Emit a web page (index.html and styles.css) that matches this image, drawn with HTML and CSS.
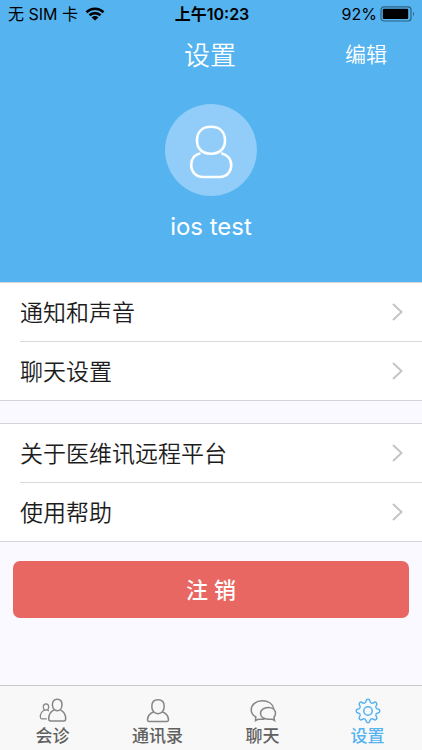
FILE: index.html
```html
<!DOCTYPE html>
<html lang="zh-CN">
<head>
<meta charset="utf-8">
<meta name="viewport" content="width=device-width, initial-scale=1">
<title>设置</title>
<link rel="stylesheet" href="styles.css">
</head>
<body>
<div class="app">
  <header class="hero">
    <div class="status">
      <div class="carrier">
        <span>无 SIM 卡</span>
        <svg class="wifi" viewBox="0 0 20 14" aria-hidden="true">
          <path d="M1.500 5.200a12.200 12.200 0 0 1 17 0M4.500 8.300a8 8 0 0 1 11 0" fill="none" stroke="#000" stroke-width="2.600"/>
          <path d="M10 13.600 6.600 10.400a4.800 4.800 0 0 1 6.800 0z"/>
        </svg>
      </div>
      <time class="clock">上午10:23</time>
      <div class="power">
        <span>92%</span>
        <svg class="battery" viewBox="0 0 36 16" aria-hidden="true">
          <rect x="1" y=".8" width="30" height="14.200" rx="3" fill="none" stroke="#2d607f" stroke-width="1.200"/>
          <rect x="2.800" y="2.800" width="25.400" height="10.200" rx="1"/>
          <path d="M33 5.600q2 2.300 0 4.600z" fill="#2d607f"/>
        </svg>
      </div>
    </div>
    <div class="navbar">
      <h1 class="title">设置</h1>
      <button class="edit" type="button">编辑</button>
    </div>
    <div class="profile">
      <div class="avatar">
        <svg viewBox="0 0 92 92" fill="none" stroke="#fff" stroke-width="2.600" aria-hidden="true">
          <path d="M46 22.800c9 0 14 5.500 14 14 0 8-5.500 13-14 13s-14-5-14-13c0-8.500 5-14 14-14z"/>
          <path d="M35.500 49.200C29.500 50.500 26.200 55 26.200 61c0 7 5 12 11.800 12h16.500C61.500 73 66.200 68 66.200 61c0-6-4-10.500-10-11.800"/>
        </svg>
      </div>
      <p class="name">ios test</p>
    </div>
  </header>
  <main class="content">
    <nav class="group" aria-label="通用">
      <a class="row" href="#notify"><span class="cell"><span class="label">通知和声音</span><svg class="chevron" viewBox="0 0 11 18"><path d="m1 1 8.500 8L1 17"/></svg></span></a>
      <a class="row" href="#chat-settings"><span class="cell"><span class="label">聊天设置</span><svg class="chevron" viewBox="0 0 11 18"><path d="m1 1 8.500 8L1 17"/></svg></span></a>
    </nav>
    <nav class="group" aria-label="关于">
      <a class="row" href="#about"><span class="cell"><span class="label">关于医维讯远程平台</span><svg class="chevron" viewBox="0 0 11 18"><path d="m1 1 8.500 8L1 17"/></svg></span></a>
      <a class="row" href="#help"><span class="cell"><span class="label">使用帮助</span><svg class="chevron" viewBox="0 0 11 18"><path d="m1 1 8.500 8L1 17"/></svg></span></a>
    </nav>
    <button class="logout" type="button">注 销</button>
  </main>
  <nav class="tabs" aria-label="主导航">
    <a class="tab" href="#consult">
      <svg viewBox="0 0 28 26">
        <path d="M18.200 1.200c3.200 0 4.800 2.300 4.800 5.600 0 3.400-2 6-4.800 6s-4.800-2.600-4.800-6c0-3.300 1.600-5.600 4.800-5.600z"/>
        <path d="M15 11.800C11.500 13.500 9.700 16.500 9.700 20.700q0 2.300 2 2.300h13q2 0 2-2.300c0-4.200-1.800-7.200-5.300-8.900"/>
        <ellipse cx="7" cy="9" rx="2.700" ry="3.100" stroke-width="1.200"/>
        <path d="M5.700 12C2.700 13.400 1.300 15.500 1.300 19q0 1.800 1.500 1.800h5M8.400 12l1.500.9" stroke-width="1.200"/>
      </svg>
      <span>会诊</span>
    </a>
    <a class="tab" href="#contacts">
      <svg viewBox="0 0 28 26">
        <path d="M14 1.800c4 0 6.200 2.800 6.200 6.600 0 4.200-2.700 7.300-6.200 7.300s-6.200-3.100-6.200-7.300c0-3.800 2.200-6.600 6.200-6.600z"/>
        <path d="M10 13.800c-4.300 1.500-6.500 4.400-6.500 8.200q0 1.400 1.400 1.400h18.200q1.400 0 1.400-1.400c0-3.800-2.200-6.700-6.500-8.200"/>
      </svg>
      <span>通讯录</span>
    </a>
    <a class="tab" href="#chat">
      <svg viewBox="0 0 28 26">
        <path d="M15.500 21.200H11q-2.500 0-4.500 1.300l.3-3.500C3.800 17.300 2.200 15 2.200 12 2.200 6.700 7 2.800 13.200 2.800c5.800 0 10.500 3 11.600 8"/>
        <path d="M25.500 22.500l-.6-3.200c1.100-1.200 1.600-2.500 1.600-4 0-3.500-3-5.900-7.300-5.900s-7.700 2.500-7.700 6 3.400 5.900 7.700 5.900h3.300q1.400 0 3 1.200z"/>
      </svg>
      <span>聊天</span>
    </a>
    <a class="tab active" href="#settings" aria-current="page">
      <svg viewBox="-14 -13 28 26">
        <defs><path id="tooth" d="M-3.330-8.040C-2.200-8.500-2-9.200-1.900-10Q-1.700-11.800 0-11.800Q1.700-11.800 1.900-10C2-9.200 2.200-8.500 3.330-8.040"/></defs>
        <use href="#tooth"/><use href="#tooth" transform="rotate(45)"/><use href="#tooth" transform="rotate(90)"/><use href="#tooth" transform="rotate(135)"/><use href="#tooth" transform="rotate(180)"/><use href="#tooth" transform="rotate(225)"/><use href="#tooth" transform="rotate(270)"/><use href="#tooth" transform="rotate(315)"/>
        <circle r="4.200"/>
      </svg>
      <span>设置</span>
    </a>
  </nav>
</div>
</body>
</html>
```
FILE: styles.css
```css
* {
  box-sizing: border-box;
}

body {
  margin: 0;
  background: #f9f9ff;
  color: #1c1c1c;
  font-family: Inter, "Noto Sans CJK SC", sans-serif;
}

h1,
p {
  margin: 0;
  font-weight: 400;
}

a {
  color: inherit;
  text-decoration: none;
}

button {
  border: 0;
  font-family: inherit;
  cursor: pointer;
}

.app {
  display: flex;
  flex-direction: column;
  min-height: 100vh;
}

.hero {
  padding-bottom: 38px;
  background: #55b3f0;
  color: #fff;
}

.status {
  display: grid;
  grid-template-columns: 1fr auto 1fr;
  align-items: center;
  height: 28px;
  padding: 0 6px 0 8px;
  color: #000;
  font-size: 16px;
  line-height: 28px;
}

.carrier,
.power {
  display: flex;
  align-items: center;
  gap: 7px;
}

.power {
  justify-content: flex-end;
  gap: 3px;
}

.clock {
  font-weight: 600;
}

.wifi {
  width: 20px;
  height: 14px;
}

.battery {
  width: 36px;
  height: 16px;
}

.navbar {
  display: grid;
  grid-template-columns: 1fr auto 1fr;
  align-items: center;
  height: 56px;
  padding: 0 35px 0 33px;
}

.title {
  grid-column: 2;
  font-size: 26px;
  font-weight: 350;
  line-height: 56px;
}

.edit {
  justify-self: end;
  padding: 0 0 6px;
  background: none;
  color: #fff;
  font-size: 21px;
  font-weight: 350;
}

.profile {
  display: flex;
  flex-direction: column;
  align-items: center;
  gap: 14px;
  padding-top: 20px;
}

.avatar {
  width: 92px;
  height: 92px;
  border-radius: 50%;
  background: #91cdf8;
}

.avatar svg {
  display: block;
}

.name {
  font-size: 24px;
  line-height: 34px;
}

.content {
  flex: 1;
}

.group {
  border: solid #d3d3da;
  border-width: 1px 0;
  background: #fff;
}

.group + .group {
  margin-top: 22px;
}

.row {
  display: block;
  padding-left: 20px;
}

.cell {
  display: flex;
  align-items: center;
  justify-content: space-between;
  height: 58px;
  padding-right: 19px;
  font-size: 23px;
  font-weight: 350;
}

.row + .row .cell {
  height: 59px;
  border-top: 1px solid #d9d9dc;
}

.label {
  padding-bottom: 3px;
}

.chevron {
  width: 11px;
  height: 18px;
  fill: none;
  stroke: #c4c4c8;
  stroke-width: 2;
}

.logout {
  display: block;
  width: calc(100% - 26px);
  height: 57px;
  margin: 19px 13px;
  padding: 0 0 4px;
  border-radius: 7px;
  background: #e96763;
  color: #fff;
  font-size: 22px;
  font-weight: 500;
}

.tabs {
  display: grid;
  grid-template-columns: repeat(4, 1fr);
  height: 65px;
  padding-right: 2px;
  border-top: 1px solid #c8c8cc;
  background: #f8f8f8;
}

.tab {
  display: flex;
  flex-direction: column;
  align-items: center;
  padding-top: 12px;
  color: #606060;
  font-size: 17px;
  font-weight: 500;
  line-height: 24px;
}

.tab svg {
  width: 28px;
  height: 26px;
  fill: none;
  stroke: #858585;
  stroke-width: 1.5px;
}

.tab.active {
  color: #55b3f0;
}

.tab.active svg {
  stroke: #55b3f0;
}
```
